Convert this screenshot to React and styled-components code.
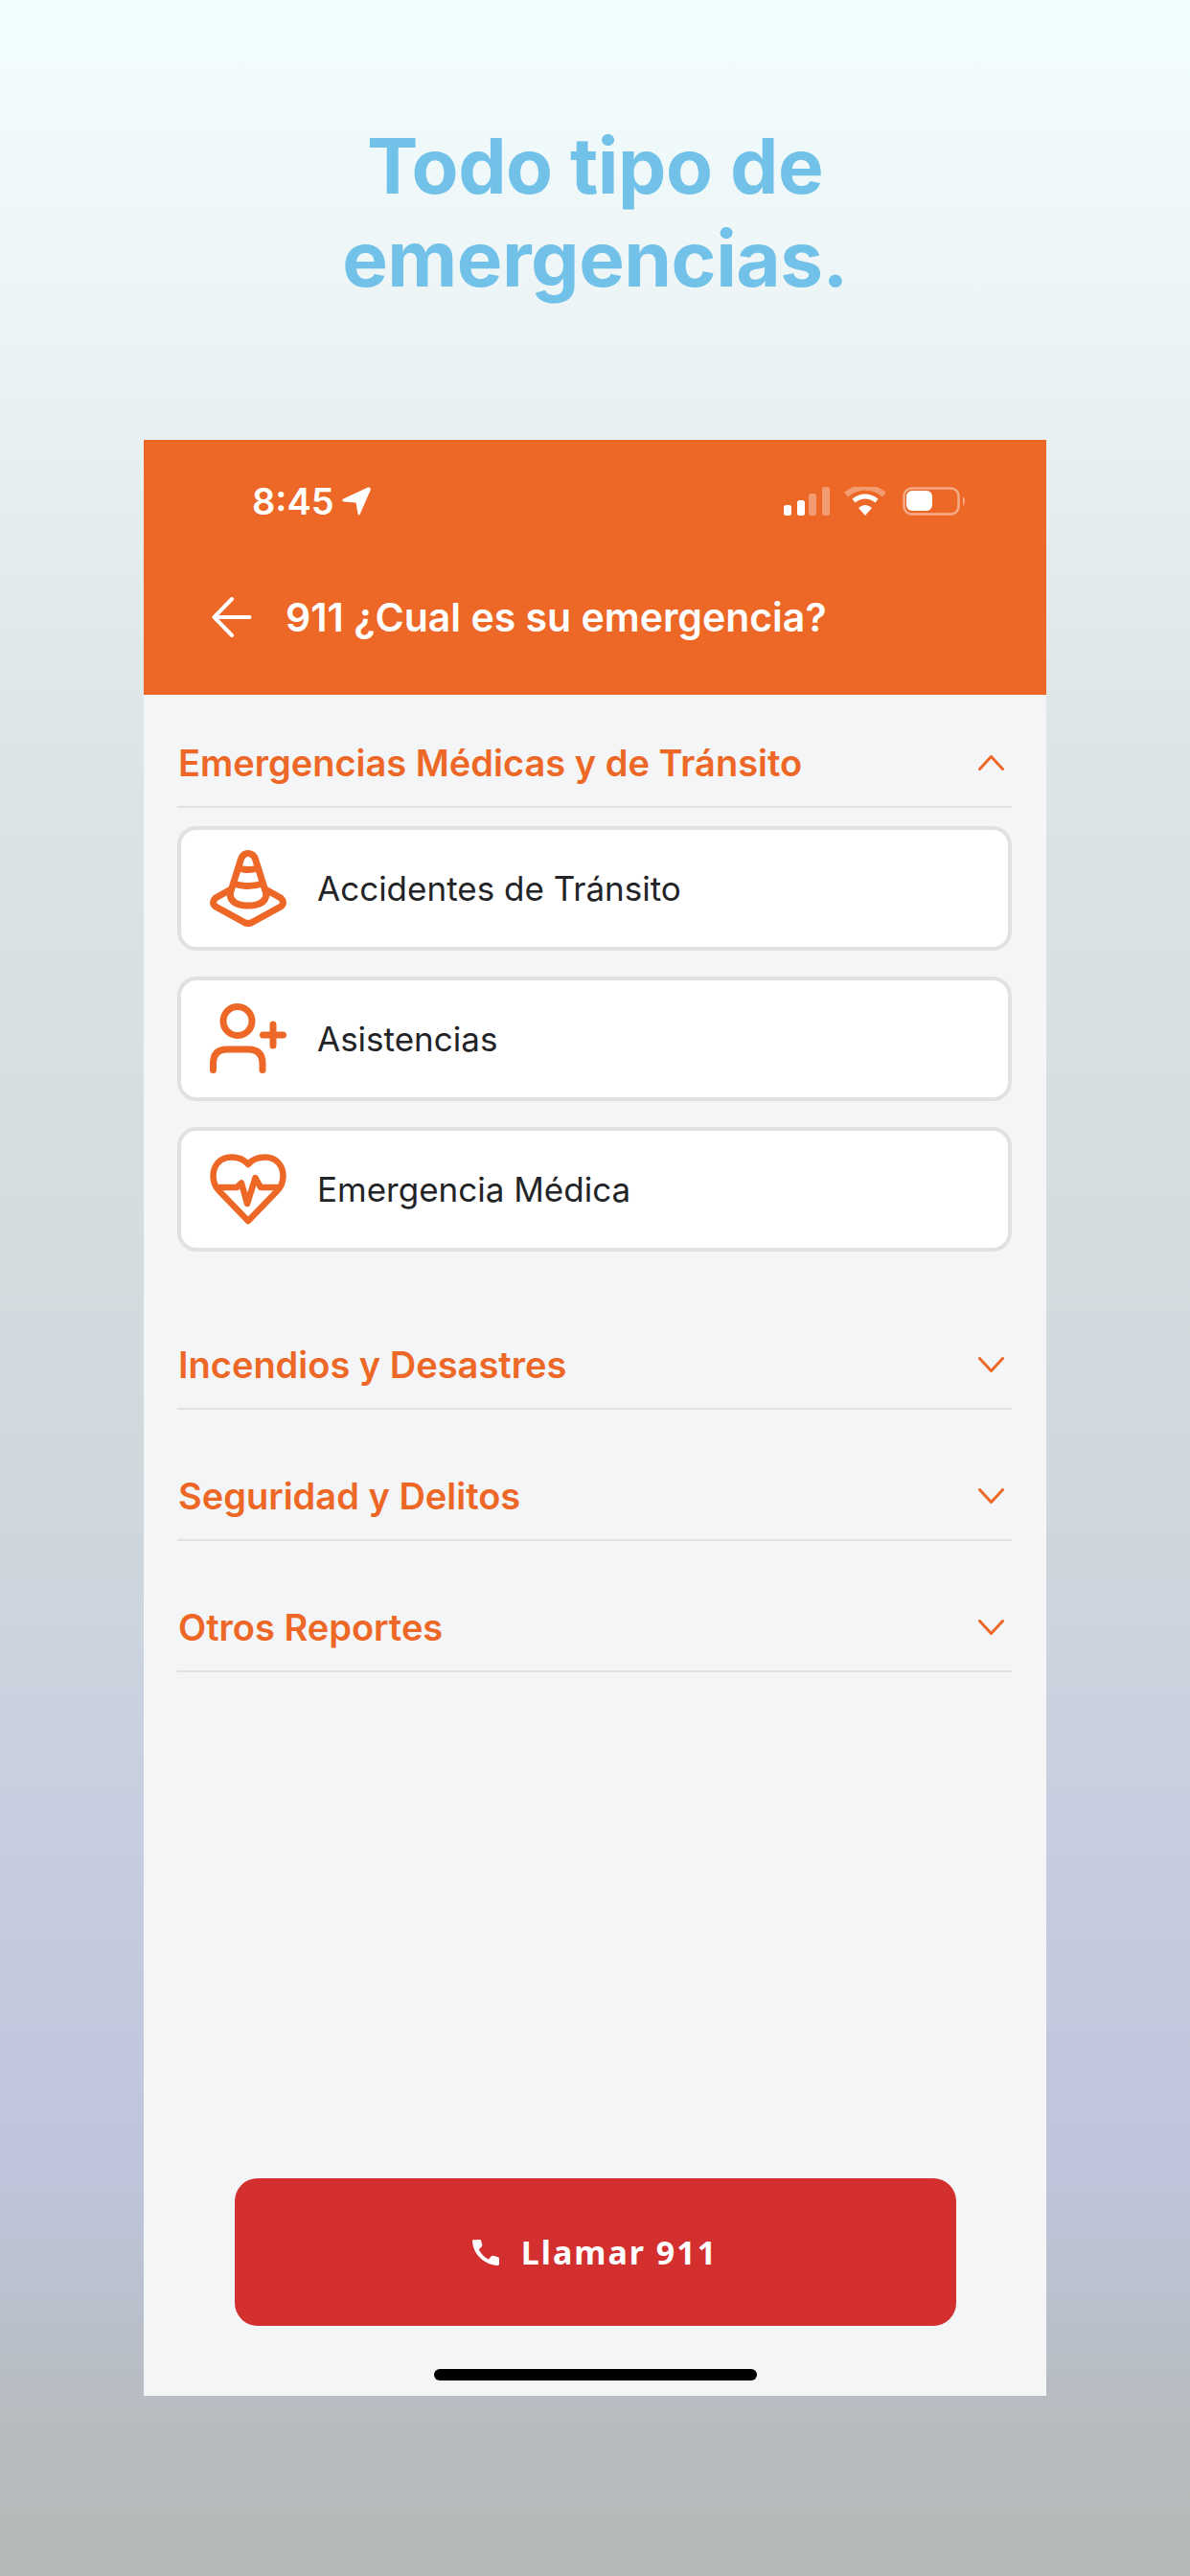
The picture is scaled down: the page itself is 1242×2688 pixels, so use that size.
import React from "react";
import styled, { createGlobalStyle } from "styled-components";

const ORANGE = "#ed6726";

const GlobalStyle = createGlobalStyle`
  html, body {
    margin: 0;
    padding: 0;
  }
  body {
    font-family: Inter, "Liberation Sans", sans-serif;
  }
`;

const sections = [
  { title: "Incendios y Desastres" },
  { title: "Seguridad y Delitos" },
  { title: "Otros Reportes" },
];

const ConeIcon = () => (
  <svg width="80" height="80" viewBox="0 0 80 80" fill="none" stroke={ORANGE} strokeWidth="7" strokeLinecap="round" strokeLinejoin="round">
    <path d="M21 46 L32 11 Q34 3.5 40 3.5 Q46 3.5 48 11 L59 46" />
    <path d="M30 19 Q40 22 50 19" />
    <path d="M25 35 Q40 40 55 35" />
    <path d="M21 46 Q22 58 40 58 Q58 58 59 46" />
    <path d="M22 41 L6 50 Q1 55 6 59 L36 75.5 Q40 77.5 44 75.5 L74 59 Q79 55 74 50 L58 41" />
  </svg>
);

const PersonPlusIcon = () => (
  <svg width="80" height="80" viewBox="0 0 80 80" fill="none" stroke={ORANGE} strokeWidth="7" strokeLinecap="round" strokeLinejoin="round">
    <circle cx="29" cy="21.5" r="15" />
    <path d="M3.5 72.5 V66 Q3.5 51 18 51 H40 Q55 51 55 66 V72.5" />
    <path d="M55.5 36 H76.5 M66 25 V47" />
  </svg>
);

const HeartIcon = () => (
  <svg width="80" height="80" viewBox="0 0 80 80" fill="none" stroke={ORANGE} strokeWidth="6.5" strokeLinecap="round" strokeLinejoin="round">
    <path d="M40 14 C36 9 30 6.5 22 6.5 C11 6.5 3.5 15 3.5 26 C3.5 33 6 38 10 42 L40 73 L70 42 C74 38 76.5 33 76.5 26 C76.5 15 69 6.5 58 6.5 C50 6.5 44 9 40 14 Z" />
    <path d="M8 38 H28 L33 33.5 L39 55 L47.5 28 L53 38 H72" />
  </svg>
);

const Chevron = ({ up }) => (
  <svg width="27" height="16" viewBox="0 0 27 16" fill="none" stroke={ORANGE} strokeWidth="3" strokeLinecap="round" strokeLinejoin="round">
    <path d={up ? "M1.5 14.5 L13.5 1.5 L25.5 14.5" : "M1.5 1.5 L13.5 14.5 L25.5 1.5"} />
  </svg>
);

const StatusIcons = () => (
  <svg width="191" height="30" viewBox="0 0 191 30" fill="#fff">
    <rect x="0" y="19" width="8" height="11" rx="2.5" />
    <rect x="14" y="14" width="8" height="16" rx="2.5" />
    <rect x="26" y="7" width="8" height="23" rx="2.5" opacity="0.35" />
    <rect x="40" y="0" width="8" height="30" rx="2.5" opacity="0.35" />
    <path d="M65 8 Q85 -7 105 8" fill="none" stroke="#fff" strokeWidth="6" opacity="0.35" />
    <path d="M73 14.5 Q85 5.5 97 14.5" fill="none" stroke="#fff" strokeWidth="5" />
    <path d="M78 22 Q85 16 92 22 L85 30 Z" />
    <rect x="125.5" y="1.5" width="57" height="27" rx="8" fill="none" stroke="#fff" strokeWidth="2.5" opacity="0.45" />
    <rect x="128" y="4" width="27" height="21" rx="6" />
    <path d="M187 10 Q191 15 187 20 Z" opacity="0.45" />
  </svg>
);

const App = () => {
  return (
    <Page>
      <GlobalStyle />
      <Title>
        Todo tipo de
        <br />
        emergencias.
      </Title>
      <Phone>
        <Header>
          <StatusBar>
            <Clock>
              8:45
              <svg width="30" height="30" viewBox="0 0 30 30" fill="#fff">
                <path d="M27 0.5 Q30.5 0 29.6 3.5 L19 28 Q17.5 31 16.5 28 L14.5 16.5 L1.5 15.5 Q-1 14 1.5 12.5 Z" />
              </svg>
            </Clock>
            <StatusIcons />
          </StatusBar>
          <NavRow>
            <BackArrow width="42" height="42" viewBox="0 0 42 42" fill="none" stroke="#fff" strokeWidth="4" strokeLinecap="round" strokeLinejoin="round">
              <path d="M39.5 21 H3 M21 2 L2.5 21 L21 40" />
            </BackArrow>
            <NavTitle>911 ¿Cual es su emergencia?</NavTitle>
          </NavRow>
        </Header>
        <Content>
          <Section>
            <SectionHead>
              <SectionTitle>Emergencias Médicas y de Tránsito</SectionTitle>
              <Chevron up />
            </SectionHead>
            <Cards>
              <Card>
                <ConeIcon />
                <CardLabel>Accidentes de Tránsito</CardLabel>
              </Card>
              <Card>
                <PersonPlusIcon />
                <CardLabel>Asistencias</CardLabel>
              </Card>
              <Card>
                <HeartIcon />
                <CardLabel>Emergencia Médica</CardLabel>
              </Card>
            </Cards>
          </Section>
          {sections.map((s) => (
            <SectionHead key={s.title}>
              <SectionTitle>{s.title}</SectionTitle>
              <Chevron />
            </SectionHead>
          ))}
        </Content>
        <Footer>
          <CallButton>
            <svg width="28" height="28" viewBox="0 0 24 24" fill="#fff">
              <path d="M6.6 0.8 L1 1 C0.4 1 0 1.5 0 2 C0.4 13.5 10 23.3 22.6 24 C23.4 24 24 23.5 24 22.8 V17.6 C24 17 23.6 16.6 23 16.4 L18.6 15.2 C18 15 17.5 15.2 17 15.7 L14.6 18.5 C11 16.8 7.4 13 5.8 9.6 L8.4 7 C8.8 6.6 8.9 6 8.8 5.5 L7.8 1.7 C7.6 1.1 7.2 0.8 6.6 0.8 Z" />
            </svg>
            Llamar 911
          </CallButton>
          <HomeBar />
        </Footer>
      </Phone>
    </Page>
  );
};

const Page = styled.div`
  box-sizing: border-box;
  width: 1242px;
  height: 2688px;
  overflow: hidden;
  padding-top: 124px;
  background: linear-gradient(
    180deg,
    #f3feff 0%,
    #eef6f7 10%,
    #dce4e6 30%,
    #d0d8dd 58%,
    #c6cde0 72%,
    #bfc6dc 84%,
    #b6bbbd 95%,
    #b4b9b9 100%
  );
`;

const Title = styled.h1`
  margin: 0 0 141px;
  text-align: center;
  font-size: 80px;
  line-height: 97px;
  font-weight: 700;
  letter-spacing: -0.5px;
  color: #72c1e8;
`;

const Phone = styled.div`
  display: flex;
  flex-direction: column;
  width: 942px;
  height: 2041px;
  margin: 0 auto;
  background: #f4f5f7;
`;

const Header = styled.header`
  box-sizing: border-box;
  height: 266px;
  padding: 48px 84px 0 71px;
  background: ${ORANGE};
`;

const StatusBar = styled.div`
  display: flex;
  align-items: center;
  justify-content: space-between;
  height: 32px;
  padding-left: 42px;
  margin-right: -1px;
`;

const Clock = styled.div`
  display: flex;
  align-items: center;
  gap: 8px;
  font-size: 38px;
  font-weight: 600;
  color: #fff;
`;

const NavRow = styled.div`
  display: flex;
  align-items: center;
  gap: 35px;
  margin-top: 80px;
`;

const BackArrow = styled.svg`
  flex: none;
`;

const NavTitle = styled.div`
  font-size: 41px;
  font-weight: 600;
  color: #fff;
  white-space: nowrap;
`;

const Content = styled.main`
  flex: 1;
  padding: 0 36px 0 35px;
`;

const Section = styled.section`
  margin-bottom: 47px;
`;

const SectionHead = styled.div`
  display: flex;
  align-items: center;
  justify-content: space-between;
  box-sizing: border-box;
  height: 118px;
  padding: 26px 8px 0 1px;
  border-bottom: 2px solid #e1e2e4;
  margin-top: 19px;

  section > & {
    margin-top: 0;
  }
`;

const SectionTitle = styled.div`
  font-size: 38px;
  font-weight: 600;
  color: ${ORANGE};
`;

const Cards = styled.div`
  display: flex;
  flex-direction: column;
  gap: 27px;
  margin-top: 19px;
`;

const Card = styled.div`
  display: flex;
  align-items: center;
  gap: 32px;
  box-sizing: border-box;
  height: 130px;
  padding: 0 30px;
  background: #fff;
  border: 4px solid #e0e1e3;
  border-radius: 20px;
`;

const CardLabel = styled.span`
  font-size: 35px;
  font-weight: 400;
  color: #232427;
`;

const Footer = styled.footer`
  display: flex;
  flex-direction: column;
  align-items: center;
  padding-bottom: 16px;
`;

const CallButton = styled.button`
  display: flex;
  align-items: center;
  justify-content: center;
  gap: 23px;
  width: 753px;
  height: 154px;
  border: none;
  border-radius: 24px;
  background: #d22f2e;
  color: #fff;
  font-family: "Noto Sans", sans-serif;
  font-size: 34px;
  font-weight: 700;
  letter-spacing: 2px;
`;

const HomeBar = styled.div`
  width: 337px;
  height: 12px;
  margin-top: 45px;
  border-radius: 6px;
  background: #000;
`;

export default App;
